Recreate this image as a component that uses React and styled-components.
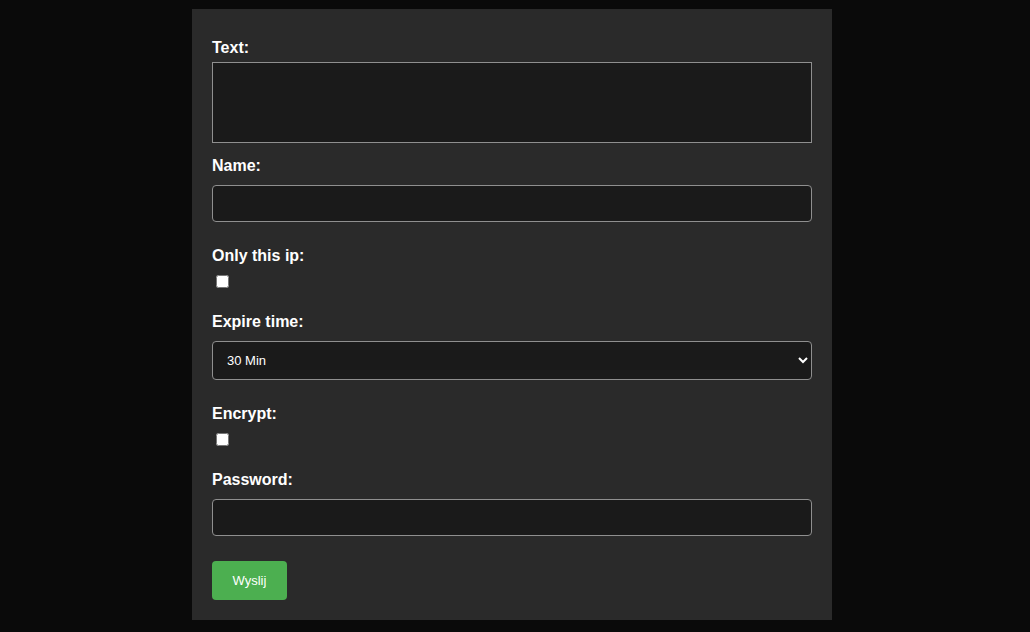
import React from "react";
import styled, { createGlobalStyle } from "styled-components";

const Global = createGlobalStyle`
  html, body {
    margin: 0;
    padding: 0;
    background: #0a0a0a;
    font-family: "Liberation Sans", Arial, sans-serif;
  }
`;

const Page = styled.div`
  display: flex;
  justify-content: center;
  padding: 9px 6px 12px 0;
  min-height: 632px;
  box-sizing: border-box;
`;

const Panel = styled.form`
  width: 640px;
  box-sizing: border-box;
  background: #2a2a2a;
  padding: 20px 20px 20px;
  display: flex;
  flex-direction: column;
  align-items: flex-start;
`;

const Label = styled.label`
  display: block;
  color: #ffffff;
  font-weight: bold;
  font-size: 16px;
  line-height: 18px;
  margin-top: ${(p) => p.$top ?? 25}px;
  margin-bottom: ${(p) => p.$bottom ?? 10}px;
`;

const fieldBase = `
  box-sizing: border-box;
  width: 600px;
  background: #1a1a1a;
  border: 1px solid #8f8f8f;
  color: #ffffff;
  font-family: "Liberation Sans", Arial, sans-serif;
  font-size: 13px;
  outline: none;
  margin: 0;
`;

const TextArea = styled.textarea`
  ${fieldBase}
  display: block;
  height: 81px;
  border-radius: 0;
  padding: 8px;
  resize: none;
`;

const Input = styled.input`
  ${fieldBase}
  display: block;
  height: 37px;
  border-radius: 4px;
  padding: 10px;
`;

const Select = styled.select`
  ${fieldBase}
  display: block;
  height: 39px;
  border-radius: 4px;
  padding: 0 10px;
  color-scheme: dark;
`;

const CheckRow = styled.div`
  display: flex;
  height: 13px;
`;

const Check = styled.input`
  width: 13px;
  height: 13px;
  margin: 0 0 0 4px;
`;

const Button = styled.button`
  margin-top: 25px;
  height: 39px;
  width: 75px;
  padding: 0;
  border: none;
  border-radius: 4px;
  background: #4caf50;
  color: #ffffff;
  font-family: "Liberation Sans", Arial, sans-serif;
  font-size: 13px;
  cursor: pointer;
`;

export default function App() {
  return (
    <>
      <Global />
      <Page>
        <Panel onSubmit={(e) => e.preventDefault()}>
          <Label $top={10} $bottom={5}>Text:</Label>
          <TextArea />
          <Label $top={14}>Name:</Label>
          <Input type="text" />
          <Label>Only this ip:</Label>
          <CheckRow>
            <Check type="checkbox" />
          </CheckRow>
          <Label>Expire time:</Label>
          <Select defaultValue="30">
            <option value="30">30 Min</option>
            <option value="60">1 Hour</option>
            <option value="1440">1 Day</option>
          </Select>
          <Label>Encrypt:</Label>
          <CheckRow>
            <Check type="checkbox" />
          </CheckRow>
          <Label>Password:</Label>
          <Input type="password" />
          <Button type="submit">Wyslij</Button>
        </Panel>
      </Page>
    </>
  );
}
